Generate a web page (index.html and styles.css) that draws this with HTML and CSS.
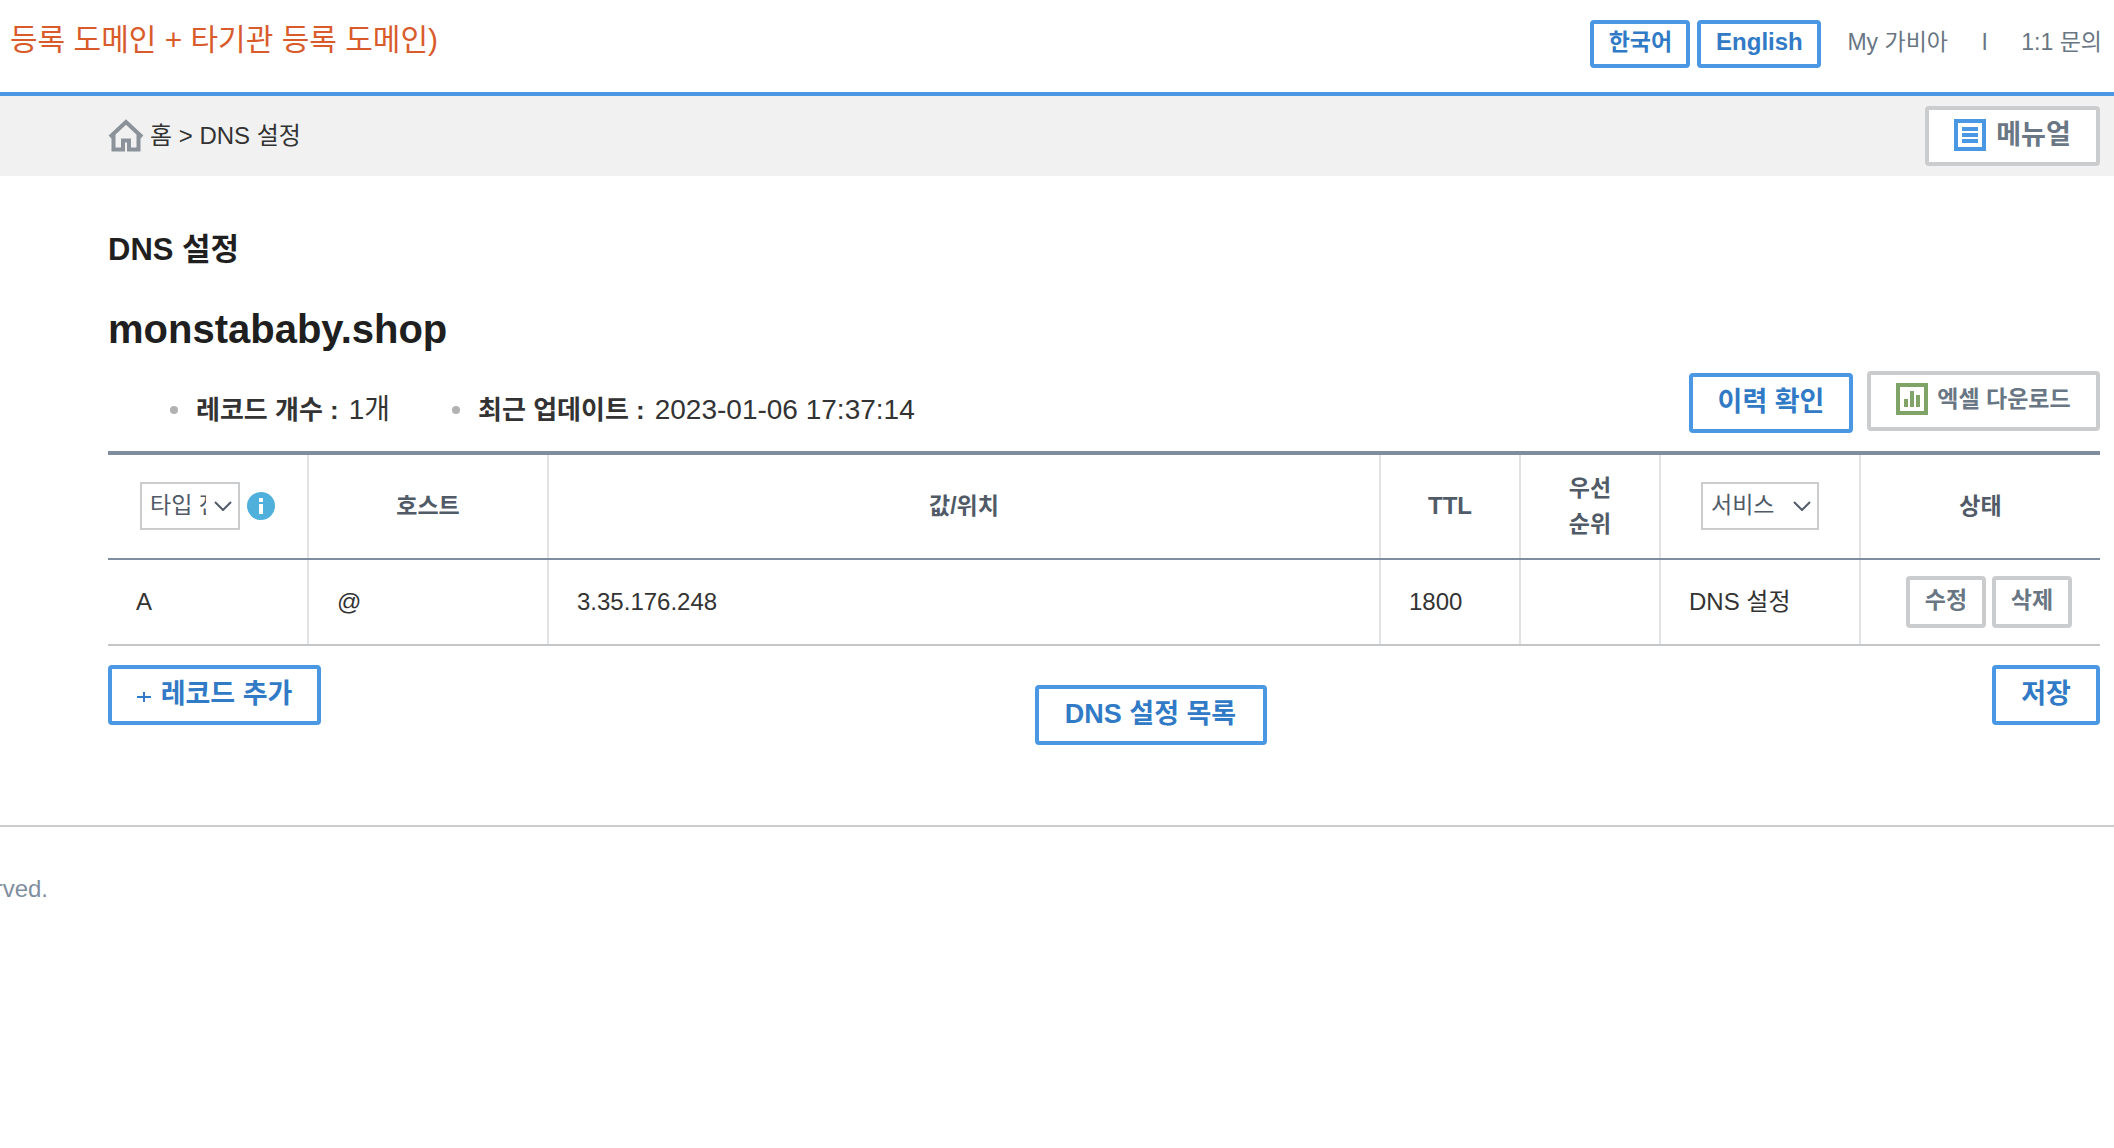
FILE: index.html
```
<!DOCTYPE html>
<html lang="ko">
<head>
    <meta charset="UTF-8">
    <meta name="viewport" content="width=device-width, initial-scale=1.0">
    <title>DNS 설정</title>
    <link rel="stylesheet" href="styles.css">
</head>
<body>
    <!-- Header -->
    <header class="header">
        <p class="header-title">등록 도메인 + 타기관 등록 도메인)</p>
        <nav class="header-nav">
            <button type="button" class="btn btn-blue btn-lang">한국어</button>
            <button type="button" class="btn btn-blue btn-lang english">English</button>
            <a href="#" class="nav-link">My 가비아</a>
            <span class="nav-bar">l</span>
            <a href="#" class="nav-link">1:1 문의</a>
        </nav>
    </header>

    <!-- Breadcrumb -->
    <div class="breadcrumb">
        <div class="path">
            <svg class="icon-home" viewBox="0 0 36 34" aria-hidden="true">
                <path d="M2 18 L18 3 L34 18 M5.500 15 V30.500 H15 V21.500 H21 V30.500 H30.500 V15" fill="none" stroke="#8b9299" stroke-width="4"/>
            </svg>
            <span>홈 &gt; DNS 설정</span>
        </div>
        <button type="button" class="btn btn-gray btn-manual">
            <svg class="icon" viewBox="0 0 32 32" aria-hidden="true">
                <rect x="2" y="2" width="28" height="28" fill="#fff" stroke="#4a98e4" stroke-width="4"/>
                <path d="M8 10 H24 M8 16 H24 M8 22 H24" stroke="#4a98e4" stroke-width="4"/>
            </svg>
            메뉴얼
        </button>
    </div>

    <main class="container">
        <h1>DNS 설정</h1>
        <h2>monstababy.shop</h2>

        <!-- Record summary -->
        <div class="summary">
            <ul class="summary-list">
                <li><strong>레코드 개수 :</strong> <span>1개</span></li>
                <li><strong>최근 업데이트 :</strong> <span>2023-01-06 17:37:14</span></li>
            </ul>
            <div class="summary-buttons">
                <button type="button" class="btn btn-blue btn-history">이력 확인</button>
                <button type="button" class="btn btn-gray btn-excel">
                    <svg class="icon" viewBox="0 0 32 32" aria-hidden="true">
                        <rect x="2" y="2" width="28" height="28" fill="#fff" stroke="#80a367" stroke-width="4"/>
                        <path d="M10 24 V16 M16 24 V8 M22 24 V12" stroke="#80a367" stroke-width="4"/>
                    </svg>
                    엑셀 다운로드
                </button>
            </div>
        </div>

        <!-- DNS records -->
        <table class="records">
            <colgroup>
                <col class="col-type">
                <col class="col-host">
                <col class="col-value">
                <col class="col-ttl">
                <col class="col-priority">
                <col class="col-service">
                <col class="col-status">
            </colgroup>
            <thead>
                <tr>
                    <th>
                        <div class="filter">
                            <div class="select-box">
                                <select class="select-type" aria-label="타입">
                                    <option>타입 전체</option>
                                </select>
                                <svg class="chevron" viewBox="0 0 18 10" aria-hidden="true"><path d="M1 1 L9 9 L17 1"/></svg>
                            </div>
                            <svg class="icon-info" viewBox="0 0 28 28" aria-hidden="true">
                                <circle cx="14" cy="14" r="14" fill="#50b0dc"/>
                                <path d="M12 6 h4 v4 h-4 z M12 12 h4 v10 h-4 z" fill="#fff"/>
                            </svg>
                        </div>
                    </th>
                    <th>호스트</th>
                    <th>값/위치</th>
                    <th class="ttl">TTL</th>
                    <th>우선<br>순위</th>
                    <th>
                        <div class="filter">
                            <div class="select-box">
                                <select class="select-service" aria-label="서비스">
                                    <option>서비스</option>
                                </select>
                                <svg class="chevron" viewBox="0 0 18 10" aria-hidden="true"><path d="M1 1 L9 9 L17 1"/></svg>
                            </div>
                        </div>
                    </th>
                    <th>상태</th>
                </tr>
            </thead>
            <tbody>
                <tr>
                    <td>A</td>
                    <td>@</td>
                    <td>3.35.176.248</td>
                    <td>1800</td>
                    <td></td>
                    <td>DNS 설정</td>
                    <td>
                        <div class="row-buttons">
                            <button type="button" class="btn btn-gray btn-row">수정</button>
                            <button type="button" class="btn btn-gray btn-row">삭제</button>
                        </div>
                    </td>
                </tr>
            </tbody>
        </table>

        <!-- Bottom buttons -->
        <div class="actions">
            <button type="button" class="btn btn-blue btn-add">
                <svg class="icon-plus" viewBox="0 0 14 10" aria-hidden="true"><path d="M0 5 H14 M7 0 V10" stroke="#317ac6" stroke-width="2"/></svg>
                레코드 추가
            </button>
            <button type="button" class="btn btn-blue btn-list">DNS 설정 목록</button>
            <button type="button" class="btn btn-blue btn-save">저장</button>
        </div>
    </main>

    <footer class="footer">
        <p class="copyright">rved.</p>
    </footer>
</body>
</html>
```
FILE: styles.css
```
/* Reset and Base Styles */
* {
    margin: 0;
    padding: 0;
    box-sizing: border-box;
}

body {
    background-color: #fff;
    color: #333;
    font-family: "Liberation Sans", "Noto Sans CJK KR", sans-serif;
    font-size: 24px;
    line-height: 36px;
}

button, select {
    font-family: inherit;
    cursor: pointer;
}

/* Buttons */
.btn {
    display: flex;
    align-items: center;
    justify-content: center;
    height: 60px;
    padding-bottom: 2px;
    background-color: #fff;
    border: 4px solid;
    border-radius: 4px;
    font-size: 27px;
    font-weight: bold;
    line-height: 36px;
    white-space: nowrap;
}

.btn-blue {
    border-color: #4a98e4;
    color: #317ac6;
}

.btn-gray {
    border-color: #cbcccd;
    color: #697683;
}

.icon {
    width: 32px;
    height: 32px;
}

/* Header */
.header {
    display: flex;
    align-items: flex-start;
    justify-content: space-between;
    height: 96px;
    padding: 20px 12px 0 10px;
    border-bottom: 4px solid #4a98e4;
}

.header-title {
    color: #d95b2b;
    font-size: 30px;
    line-height: 40px;
}

.header-nav {
    display: flex;
    color: #697683;
    line-height: 44px;
}

.nav-link {
    color: inherit;
    font-size: 23px;
    text-decoration: none;
}

.nav-bar {
    margin: 0 34px;
}

.btn-lang {
    width: 100px;
    height: 48px;
    margin-right: 7px;
    padding-bottom: 4px;
    font-size: 23px;
}

.english {
    width: 124px;
    margin-right: 26px;
    font-size: 24px;
}

/* Breadcrumb */
.breadcrumb {
    display: flex;
    align-items: center;
    justify-content: space-between;
    height: 80px;
    padding: 0 14px 0 108px;
    background-color: #f1f1f1;
}

.path {
    display: flex;
    align-items: center;
    gap: 6px;
}

.icon-home {
    width: 36px;
    height: 34px;
}

.btn-manual {
    gap: 10px;
    width: 175px;
}

/* Content */
.container {
    padding: 51px 14px 80px 108px;
}

h1 {
    color: #1f1f1f;
    font-size: 31px;
    line-height: 46px;
}

h2 {
    margin-top: 26px;
    color: #1f1f1f;
    font-size: 40px;
    line-height: 60px;
}

.summary {
    display: flex;
    justify-content: space-between;
    height: 92px;
    padding-top: 12px;
}

.summary-list {
    display: flex;
    gap: 62px;
    padding: 19px 0 0 62px;
    list-style: none;
    font-size: 28px;
    line-height: 40px;
}

.summary-list li {
    display: flex;
    align-items: center;
    gap: 10px;
    height: 40px;
}

.summary-list li::before {
    content: "";
    width: 8px;
    height: 8px;
    margin-right: 8px;
    border-radius: 50%;
    background-color: #b2b2b2;
}

.summary-list strong {
    font-size: 26px;
}

.summary-buttons {
    display: flex;
    gap: 14px;
}

.btn-history {
    width: 164px;
    margin-top: 2px;
}

.btn-excel {
    gap: 9px;
    width: 233px;
    padding-bottom: 4px;
    font-size: 23px;
}

/* Table */
.records {
    width: 100%;
    border-collapse: collapse;
    border-top: 4px solid #7f8e9f;
    table-layout: fixed;
}

.col-type, .col-service {
    width: 200px;
}

.col-host, .col-status {
    width: 240px;
}

.col-ttl, .col-priority {
    width: 140px;
}

.records th, .records td {
    border-left: 2px solid #e1e2e3;
}

.records th:first-child, .records td:first-child {
    border-left: none;
}

.records th {
    height: 106px;
    padding-bottom: 2px;
    border-bottom: 2px solid #7f8e9f;
    color: #515b68;
    font-size: 23px;
}

.records .ttl {
    font-size: 24px;
}

.records td {
    height: 86px;
    padding: 0 28px;
    border-bottom: 2px solid #c5c6c7;
}

.filter {
    display: flex;
    align-items: center;
    justify-content: center;
    gap: 7px;
}

.select-box {
    position: relative;
}

.select-box select {
    display: block;
    height: 48px;
    padding: 0 32px 2px 8px;
    appearance: none;
    background-color: #fff;
    border: 2px solid #cbcccd;
    color: #515b68;
    font-size: 23px;
}

.select-box .select-type {
    width: 100px;
}

.select-box .select-service {
    width: 118px;
}

.chevron {
    position: absolute;
    top: 19px;
    right: 8px;
    width: 18px;
    height: 10px;
    fill: none;
    stroke: #515b68;
    stroke-width: 2px;
    pointer-events: none;
}

.icon-info {
    width: 28px;
    height: 28px;
}

.row-buttons {
    display: flex;
    justify-content: flex-end;
    gap: 6px;
}

.btn-row {
    width: 80px;
    height: 52px;
    padding-bottom: 4px;
    font-size: 23px;
}

/* Bottom buttons */
.actions {
    display: flex;
    align-items: flex-start;
    justify-content: space-between;
    margin-top: 19px;
}

.btn-add {
    gap: 10px;
    width: 213px;
}

.icon-plus {
    width: 14px;
    height: 10px;
    margin-top: 6px;
}

.btn-list {
    width: 232px;
    margin: 20px 12px 0 0;
}

.btn-save {
    width: 108px;
}

/* Footer */
.footer {
    padding-top: 44px;
    border-top: 2px solid #cbcccd;
    color: #7f8e9f;
}

.copyright {
    display: flex;
    justify-content: flex-end;
    width: 48px;
}
```
